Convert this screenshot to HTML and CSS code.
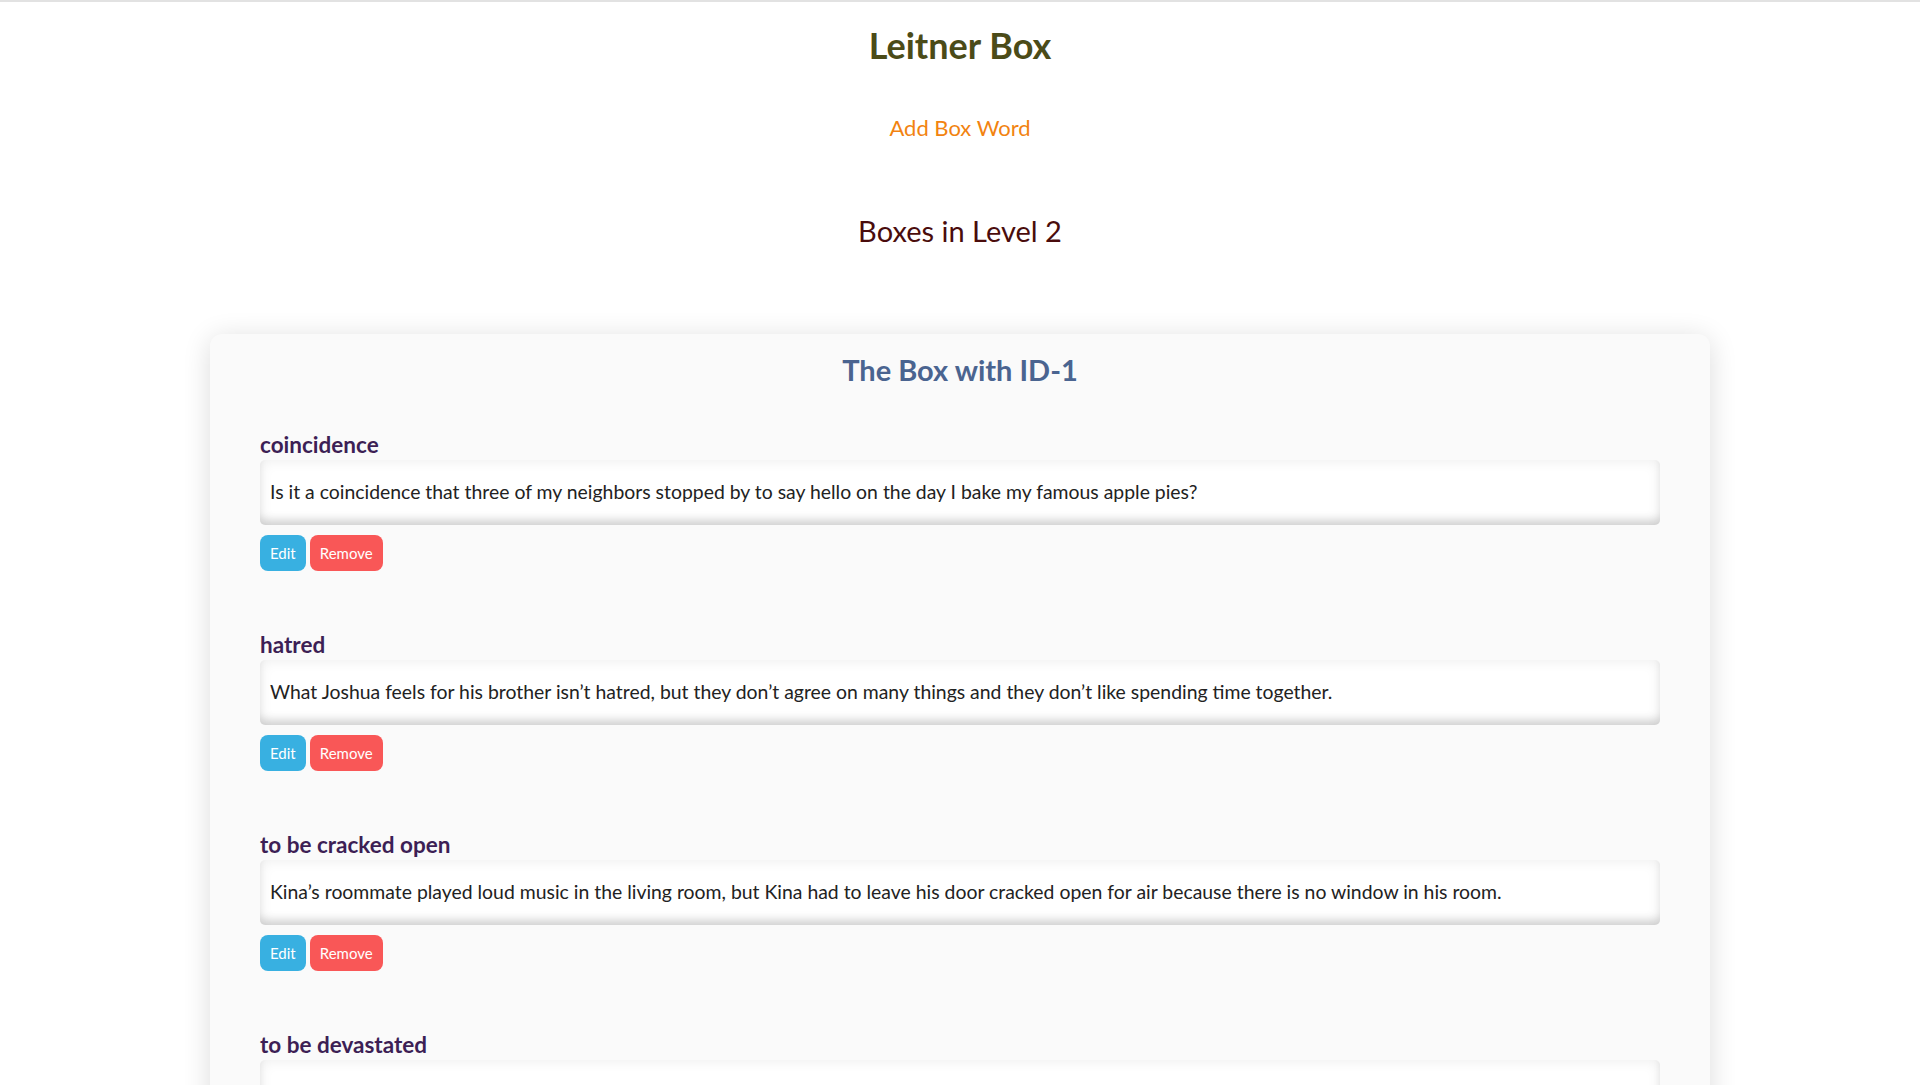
FILE: index.html
```html
<!DOCTYPE html>
<html lang="en">
<head>
<meta charset="utf-8">
<title>Leitner Box</title>
<link rel="stylesheet" href="styles.css">
</head>
<body>
<div class="page">
  <h1 class="app-title">Leitner Box</h1>
  <a class="add-link" href="#">Add Box Word</a>
  <h2 class="level-title">Boxes in Level 2</h2>

  <section class="box-card">
    <h3 class="box-title">The Box with ID-1</h3>

    <div class="word">
      <h4 class="word-title">coincidence</h4>
      <div class="word-text">Is it a coincidence that three of my neighbors stopped by to say hello on the day I bake my famous apple pies?</div>
      <div class="actions"><button class="btn btn-edit">Edit</button><button class="btn btn-remove">Remove</button></div>
    </div>

    <div class="word">
      <h4 class="word-title">hatred</h4>
      <div class="word-text">What Joshua feels for his brother isn’t hatred, but they don’t agree on many things and they don’t like spending time together.</div>
      <div class="actions"><button class="btn btn-edit">Edit</button><button class="btn btn-remove">Remove</button></div>
    </div>

    <div class="word">
      <h4 class="word-title">to be cracked open</h4>
      <div class="word-text">Kina’s roommate played loud music in the living room, but Kina had to leave his door cracked open for air because there is no window in his room.</div>
      <div class="actions"><button class="btn btn-edit">Edit</button><button class="btn btn-remove">Remove</button></div>
    </div>

    <div class="word">
      <h4 class="word-title">to be devastated</h4>
      <div class="word-text">She was devastated when she heard the news.</div>
      <div class="actions"><button class="btn btn-edit">Edit</button><button class="btn btn-remove">Remove</button></div>
    </div>
  </section>
</div>
</body>
</html>
```

FILE: styles.css
```css
html, body {
  margin: 0;
  padding: 0;
}

body {
  background: #ffffff;
  font-family: Lato, "Open Sans", "Liberation Sans", sans-serif;
  border-top: 2px solid #e2e2e2;
  color: #222222;
}

.page {
  display: flex;
  flex-direction: column;
  align-items: center;
  padding-bottom: 200px;
}

.app-title {
  margin: 22px 0 0;
  font-size: 36px;
  line-height: 42px;
  font-weight: 700;
  color: #4b4b18;
}

.add-link {
  margin-top: 48px;
  font-size: 22px;
  line-height: 28px;
  color: #f28310;
  text-decoration: none;
}

.level-title {
  margin: 71px 0 0;
  font-size: 29px;
  line-height: 36px;
  font-weight: 400;
  color: #4a0c0c;
}

.box-card {
  margin-top: 85px;
  width: 1500px;
  box-sizing: border-box;
  padding: 19px 50px 40px;
  background: #fafafa;
  border-radius: 12px;
  box-shadow: 0 4px 28px rgba(0, 0, 0, 0.14);
}

.box-title {
  margin: 0 0 45px;
  text-align: center;
  font-size: 29px;
  line-height: 34px;
  font-weight: 700;
  color: #4a6490;
}

.word {
  margin-bottom: 60.6px;
}

.word-title {
  margin: 0 0 2px;
  font-size: 22.5px;
  line-height: 26.4px;
  font-weight: 700;
  color: #3d1f55;
}

.word-text {
  background: #ffffff;
  border-radius: 5px;
  padding: 20px 10px 22px;
  font-size: 19.4px;
  line-height: 23px;
  color: #222222;
  box-shadow: inset 0 -8px 10px -3px rgba(0, 0, 0, 0.15), inset 0 0 14px rgba(0, 0, 0, 0.08);
}

.actions {
  margin-top: 10px;
  display: flex;
  gap: 4px;
}

.btn {
  height: 36px;
  padding: 0 10px;
  border: none;
  border-radius: 8px;
  font-family: Lato, "Open Sans", "Liberation Sans", sans-serif;
  font-size: 15px;
  color: #ffffff;
  cursor: pointer;
}

.btn-edit {
  background: #38b0e1;
}

.btn-remove {
  background: #f95757;
}
```
